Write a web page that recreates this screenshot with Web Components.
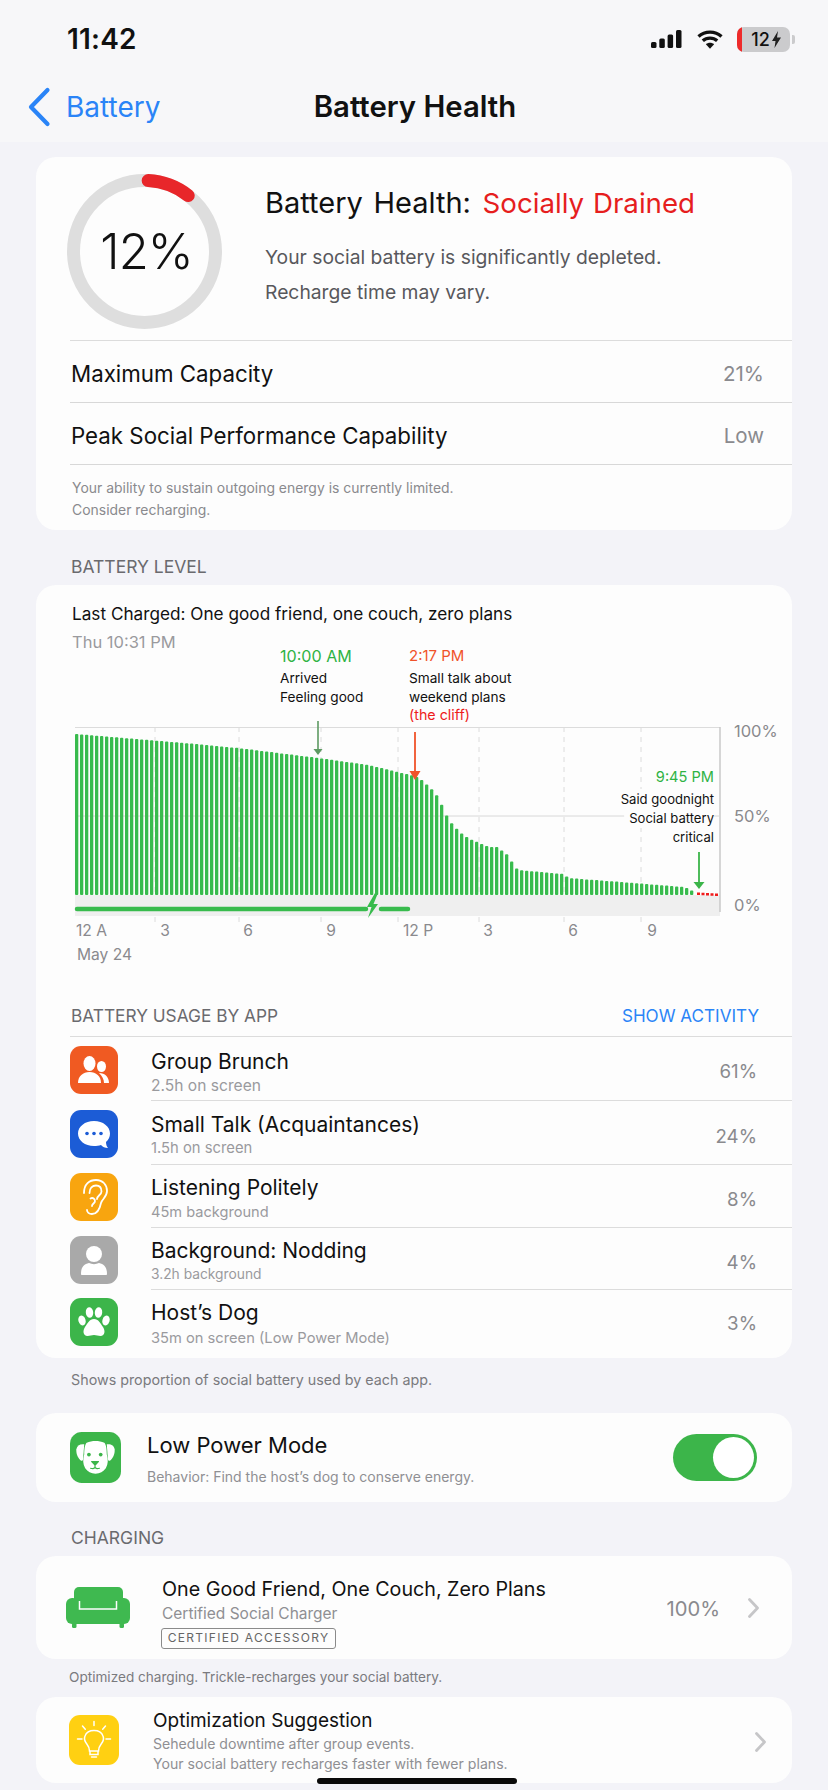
<!DOCTYPE html>
<html lang="en">
<head>
<meta charset="utf-8">
<title>Battery Health</title>
<style>
html,body{margin:0;padding:0;background:#f3f3f8}
body{font-family:Inter,"Liberation Sans",sans-serif;color:#111}
</style>
</head>
<body>
<battery-app>
  <status-bar></status-bar>
  <nav-bar back="Battery" title="Battery Health"></nav-bar>
  <page-body>
    <inset-card>
      <health-summary pct="12%"></health-summary>
      <stat-row label="Maximum Capacity" value="21%"></stat-row>
      <stat-row label="Peak Social Performance Capability" value="Low"></stat-row>
      <card-note>Your ability to sustain outgoing energy is currently limited.<br>Consider recharging.</card-note>
    </inset-card>
    <section-label style="--h:55px;--pb:7px">BATTERY LEVEL</section-label>
    <inset-card>
      <battery-chart></battery-chart>
      <usage-header></usage-header>
      <usage-row title="Group Brunch" sub="2.5h on screen" pct="61%" style="--h:64px;--it:9px;--tt:11px;--sfs:15.600px;--st:0px;--pp:10px">
        <svg slot="icon" viewBox="0 0 48 48"><rect width="48" height="48" rx="11" fill="#f05a22"/><ellipse cx="19.500" cy="17.500" rx="6" ry="7.500" fill="#fff"/><path d="M8 37c0-7 5-11 11.500-11S31 30 31 37z" fill="#fff"/><ellipse cx="31.500" cy="20.500" rx="4.500" ry="5.500" fill="#fff"/><path d="M29 27c6 0 10 4 10 10h-5c0-4-2-7-5-10z" fill="#fff"/></svg>
      </usage-row>
      <usage-row title="Small Talk (Acquaintances)" sub="1.5h on screen" pct="24%" style="--h:64px;--it:9px;--tt:10px;--sfs:14.800px;--st:-1px;--pp:12px">
        <svg slot="icon" viewBox="0 0 48 48"><rect width="48" height="48" rx="11" fill="#1c5cd6"/><path d="M24 11c9 0 16 5.500 16 12.500 0 3.500-1.500 6.500-4 8.500 0 2.500.8 4.500 2 6-3 0-5.500-1-7-3-2 .7-4.500 1-7 1-9 0-16-5.500-16-12.500S15 11 24 11z" fill="#fff"/><circle cx="17" cy="23.500" r="1.800" fill="#1c5cd6"/><circle cx="24" cy="23.500" r="1.800" fill="#1c5cd6"/><circle cx="31" cy="23.500" r="1.800" fill="#1c5cd6"/></svg>
      </usage-row>
      <usage-row title="Listening Politely" sub="45m background" pct="8%" style="--h:63px;--it:8px;--tt:9px;--sfs:14.600px;--st:0px;--pp:12px">
        <svg slot="icon" viewBox="0 0 48 48"><rect width="48" height="48" rx="11" fill="#f8a50f"/><g fill="none" stroke="#fff" stroke-width="1.800" stroke-linecap="round"><path d="M14 20C14 11 19.500 7 26 7c7 0 11 5 11 11 0 6-5 8-6 12-1 5-3 11-9 11-3 0-5-2-5-4"/><path d="M19.500 20c0-5 3-7.500 6.500-7.500 4 0 5.500 3 5.500 6 0 3.500-4.500 4-4.500 7.500"/><path d="M20.500 25.500c2-1.200 4.500 0 4.500 2.500 0 2.500-3 2.500-3 5"/></g></svg>
      </usage-row>
      <usage-row title="Background: Nodding" sub="3.2h background" pct="4%" style="--h:62px;--it:8px;--tt:9px;--sfs:13.800px;--st:-1px;--pp:12px">
        <svg slot="icon" viewBox="0 0 48 48"><rect width="48" height="48" rx="11" fill="#a9a9a9"/><circle cx="24" cy="18" r="8" fill="#fff"/><path d="M11 38c0-7 3-10 8-11 3 1.500 7 1.500 10 0 5 1 8 4 8 11 0 .7-.5 1-1 1H12c-.5 0-1-.3-1-1z" fill="#fff"/></svg>
      </usage-row>
      <usage-row title="Host’s Dog" sub="35m on screen (Low Power Mode)" pct="3%" last style="--h:68px;--it:8px;--tt:9px;--st:1px;--sfs:14.700px;--pp:11px">
        <svg slot="icon" viewBox="0 0 48 48"><rect width="48" height="48" rx="11" fill="#3cb54a"/><g fill="#fff"><ellipse cx="12" cy="22.500" rx="3.600" ry="5" transform="rotate(-18 12 22.500)"/><ellipse cx="19.500" cy="14.500" rx="3.700" ry="5.300" transform="rotate(-6 19.500 14.500)"/><ellipse cx="28.500" cy="14.500" rx="3.700" ry="5.300" transform="rotate(6 28.500 14.500)"/><ellipse cx="36" cy="22.500" rx="3.600" ry="5" transform="rotate(18 36 22.500)"/><path d="M24 21c4.500 0 6.500 4.500 9 8 2.500 3.500 2 9-2.500 9-2.500 0-4-1-6.500-1s-4 1-6.500 1c-4.500 0-5-5.500-2.500-9 2.500-3.500 4.500-8 9-8z"/></g></svg>
      </usage-row>
    </inset-card>
    <section-label style="--h:55px;--pb:22px;--fs:14.300px;--c:#7a7a7e;--pl:35px">Shows proportion of social battery used by each app.</section-label>
    <inset-card>
      <detail-row title="Low Power Mode" sub="Behavior: Find the host’s dog to conserve energy." style="--h:89px;--pl:34px;--iw:51px;--gap:26px;--tfs:22px;--sfs:14px;--tt:18px;--lh1:28px;--sm:7px;--pr:35px">
        <svg slot="icon" viewBox="0 0 52 52"><rect width="52" height="52" rx="12" fill="#3cb54a"/><path d="M14.500 12.500C10 12 7 14 6.500 17.500c-.5 4 1.500 9 4.500 11.500 1 .7 2 .3 2.300-1z" fill="#fff"/><path d="M37.500 12.500C42 12 45 14 45.500 17.500c.5 4-1.500 9-4.500 11.500-1 .7-2 .3-2.300-1z" fill="#fff"/><path d="M17 11c5.500-2.400 12.500-2.400 18 0 2 2 2.500 7 2.500 12 1.500 5 1.500 10-1 14-2.500 3.500-6 5.500-10.500 5.500S18 40.500 15.500 37c-2.500-4-2.500-9-1-14 0-5 .5-10 2.500-12z" fill="#fff"/><circle cx="19.300" cy="23" r="1.900" fill="#3cb54a"/><circle cx="31.300" cy="23" r="1.900" fill="#3cb54a"/><path d="M22 29.500h7c.5 0 .8.600.4 1.100l-2.800 3c-.6.500-1.500.5-2 0l-2.900-3c-.4-.5-.2-1.100.3-1.100z" fill="#3cb54a"/><path d="M25.500 33v3M21 37c2 .8 3.500.4 4.500-1 1 1.400 2.500 1.800 4.500 1" fill="none" stroke="#3cb54a" stroke-width="1.200" stroke-linecap="round"/></svg>
        <toggle-switch slot="trailing"></toggle-switch>
      </detail-row>
    </inset-card>
    <section-label style="--h:54px;--pb:7px">CHARGING</section-label>
    <inset-card>
      <detail-row title="One Good Friend, One Couch, Zero Plans" sub="Certified Social Charger" style="--h:103px;--pl:30px;--iw:64px;--gap:32px;--tfs:19.700px;--sfs:15.500px;--tt:19px;--lh1:28px;--sm:0px;--pr:33px">
        <svg slot="icon" viewBox="0 0 64 41" style="height:41px"><g fill="#3fb950"><rect x="8" y="0" width="49" height="19" rx="5"/><rect x="0" y="11" width="13" height="26" rx="6"/><rect x="51" y="11" width="13" height="26" rx="6"/><rect x="8" y="15" width="48" height="22"/><rect x="6" y="36" width="4.500" height="5" rx="1.500"/><rect x="53.500" y="36" width="4.500" height="5" rx="1.500"/></g><path d="M13.500 14v8h37v-8" fill="none" stroke="#fdfdfd" stroke-width="1.500"/></svg>
        <cert-badge slot="extra">CERTIFIED ACCESSORY</cert-badge>
        <value-chevron slot="trailing" value="100%"></value-chevron>
      </detail-row>
    </inset-card>
    <section-label style="--h:38px;--pb:9px;--fs:13.600px;--c:#7a7a7e;--pl:33px">Optimized charging. Trickle-recharges your social battery.</section-label>
    <inset-card>
      <detail-row title="Optimization Suggestion" sub="Sehedule downtime after group events.<br>Your social battery recharges faster with fewer plans." style="--h:86px;--pl:33px;--iw:50px;--gap:34px;--tfs:19px;--sfs:14.100px;--tt:11px;--lh1:26px;--sm:0px;--slh:20px;--pr:26px">
        <svg slot="icon" viewBox="0 0 50 50"><rect width="50" height="50" rx="11" fill="#ffd012"/><g fill="none" stroke="#fff" stroke-width="1.500" stroke-linecap="round"><path d="M20.500 36c0-4-1-5-3-7.500-2-2.500-2.500-5-1.500-7.500 1.300-3.500 5-5.500 9-5.500s7.700 2 9 5.500c1 2.500.5 5-1.500 7.500-2 2.500-3 3.500-3 7.500z"/><path d="M21 36.500v3h8v-3"/><path d="M22.500 42h5"/><path d="M25 6.500v4M13.500 11l2.800 3.200M36.500 11l-2.800 3.200M8.500 24h4.500M37 24h4.500"/></g></svg>
        <value-chevron slot="trailing" style="margin-top:3px"></value-chevron>
      </detail-row>
    </inset-card>
  </page-body>
  <home-bar></home-bar>
</battery-app>

<script>
const FONT = 'Inter,"Liberation Sans",sans-serif';
function def(name, html, setup){
  customElements.define(name, class extends HTMLElement{
    constructor(){super();this.attachShadow({mode:'open'});}
    connectedCallback(){
      const a=n=>this.getAttribute(n)||'';
      this.shadowRoot.innerHTML = typeof html==='function'?html(a,this):html;
      if(setup)setup(this.shadowRoot,this);
    }
  });
}

def('battery-app',`<style>
:host{display:block;position:relative;width:828px;height:1790px;overflow:hidden;background:#f3f3f8;font-family:${FONT};color:#111}
</style><slot></slot>`);

def('status-bar',`<style>
:host{display:flex;align-items:center;height:72px;background:#f7f7f9;padding:6px 33px 0 67px;box-sizing:border-box}
.time{font-size:28px;font-weight:600;letter-spacing:.2px;flex:1}
.ic{display:flex;align-items:center}
svg{display:block}
.bat{position:relative;width:53px;height:25px;background:#cbcbcd;border-radius:7px;margin-left:14px;overflow:hidden;display:flex;align-items:center;justify-content:center;gap:2px;font-size:18px;font-weight:500;padding-left:5px;box-sizing:border-box}
.bat i{position:absolute;left:0;top:0;bottom:0;width:5px;background:#ee2a2a}
.nub{width:3px;height:9px;background:#cbcbcd;border-radius:0 2px 2px 0;margin-left:2px}
</style>
<span class="time">11:42</span>
<span class="ic">
<svg width="31" height="18" viewBox="0 0 31 18" fill="#111"><rect x="0" y="12" width="5.500" height="6" rx="1.500"/><rect x="8.300" y="8.500" width="5.500" height="9.500" rx="1.500"/><rect x="16.600" y="4.500" width="5.500" height="13.500" rx="1.500"/><rect x="25" y="0" width="5.500" height="18" rx="1.500"/></svg>
<svg style="margin-left:15px" width="26" height="19" viewBox="0 0 26 19"><g fill="none" stroke="#111" stroke-width="3.300"><path d="M1.500 6.500C7.800.6 18.200.6 24.500 6.500"/><path d="M5.800 10.800c4-3.700 10.400-3.700 14.400 0"/></g><path d="M8.900 14.200c2.300-2 5.900-2 8.200 0L13 18.800z" fill="#111"/></svg>
<span class="bat"><i></i>12<svg width="9" height="17" viewBox="0 0 9 17"><path d="M6 0 0 10h3.500L2.500 17 9 6.500H5z" fill="#222"/></svg></span><span class="nub"></span>
</span>`);

def('nav-bar',(a)=>`<style>
:host{display:flex;align-items:center;justify-content:center;position:relative;height:70px;background:#f7f7f9;padding-bottom:2px;box-sizing:border-box}
.back{position:absolute;left:27px;top:13px;display:flex;align-items:center;gap:15px;color:#2a84f7;font-size:28px;height:44px}
h1{margin:0;font-size:29.300px;font-weight:600;color:#111;letter-spacing:0;position:relative;left:1px}
svg{display:block}
</style>
<span class="back"><svg width="24" height="40" viewBox="0 0 24 40"><path d="M20.500 3 4 20l16.500 17" fill="none" stroke="#2a84f7" stroke-width="4.200" stroke-linecap="round" stroke-linejoin="round"/></svg><span>${a('back')}</span></span>
<h1>${a('title')}</h1>`);

def('page-body',`<style>:host{display:block;padding:15px 36px 0}</style><slot></slot>`);

def('inset-card',`<style>:host{display:block;background:#fdfdfd;border-radius:20px;overflow:hidden}</style><slot></slot>`);

def('health-summary',(a)=>`<style>
:host{display:flex;height:184px;box-sizing:border-box;padding:17px 0 0 31px;position:relative}
:host::after{content:"";position:absolute;left:34px;right:0;bottom:0;height:1px;background:#dcdcdc}
.ring{position:relative;width:155px;height:155px;flex:none}
.ring svg{display:block}
.ring b{position:absolute;inset:0;padding-left:4px;display:flex;align-items:center;justify-content:center;font-size:49px;font-weight:350;color:#111;letter-spacing:-1px}
.txt{margin-left:43px;margin-top:9px}
h2{margin:0;font-size:29px;font-weight:400;line-height:40px;word-spacing:2.500px;white-space:nowrap}
h2 em{font-style:normal;color:#e61e1e;font-size:27.700px;word-spacing:1px;margin-left:1px}
p{margin:17px 0 0;font-size:19.300px;line-height:35px;color:#58585c;white-space:nowrap}
</style>
<div class="ring"><svg width="155" height="155" viewBox="0 0 155 155"><circle cx="77.500" cy="77.500" r="71" fill="none" stroke="#dedede" stroke-width="13"/><path d="M81.200 6.600A71 71 0 0 1 121.200 21.600" fill="none" stroke="#e8262a" stroke-width="13" stroke-linecap="round"/></svg><b>${a('pct')}</b></div>
<div class="txt"><h2>Battery Health: <em>Socially Drained</em></h2><p>Your social battery is significantly depleted.<br>Recharge time may vary.</p></div>`);

def('stat-row',(a)=>`<style>
:host{display:flex;align-items:center;justify-content:space-between;height:62px;padding:2px 28px 0 35px;box-sizing:border-box;position:relative;font-size:22.300px}
:host::after{content:"";position:absolute;left:34px;right:0;bottom:0;height:1px;background:#d8d8d8}
.v{color:#8a8a8e;font-size:20.500px}
</style><span>${a('label')}</span><span class="v">${a('value')}</span>`);

def('card-note',`<style>:host{display:block;padding:12px 0 9px 36px;font-size:13.950px;line-height:22px;color:#8a8a8e}</style><slot></slot>`);

def('section-label',`<style>:host{display:flex;align-items:flex-end;box-sizing:border-box;height:var(--h,55px);padding:0 0 var(--pb,7px) var(--pl,35px);font-size:var(--fs,17.500px);line-height:22px;color:var(--c,#6a6a6e);white-space:nowrap}</style><slot></slot>`);

const keys=[[75,734],[183,743],[237,748],[317,758],[367,765],[413,776],[420,780],[433,792],[438,800],[443,812],[448,821],[458,832],[468,839],[478,843],[487,847],[497,847],[502,853],[507,855],[512,866],[517,870],[562,874],[567,878],[633,883],[683,887],[693,892]];
function topAt(x){
  for(let i=1;i<keys.length;i++){
    if(x<=keys[i][0]){
      const [x0,y0]=keys[i-1],[x1,y1]=keys[i];
      return y0+(y1-y0)*(x-x0)/(x1-x0);
    }
  }
  return keys[keys.length-1][1];
}
function chartSvg(){
  let s='';
  [155,239,321,398,479,564,641].forEach(x=>{s+=`<line x1="${x}" y1="727" x2="${x}" y2="922" stroke="#dcdcdc" stroke-width="1" stroke-dasharray="5 5"/>`;});
  s+=`<rect x="75" y="895" width="645" height="21" fill="#efefef"/>`;
  s+=`<line x1="75" y1="727.500" x2="720" y2="727.500" stroke="#dcdcdc"/><line x1="720" y1="727" x2="720" y2="912" stroke="#c8c8c8" stroke-width="1.500"/>`;
  s+=`<line x1="75" y1="816" x2="720" y2="816" stroke="#d8d8d8"/>`;
  for(let x=75;x<693;x+=5){
    const t=topAt(x);
    s+=`<rect x="${x}" y="${t.toFixed(1)}" width="3.300" height="${(895-t).toFixed(1)}" rx="1" fill="#38bb4d"/>`;
  }
  for(let x=697;x<716;x+=4.500){
    s+=`<rect x="${x}" y="${892.500+(x-697)/18}" width="3" height="2.500" fill="#f01c1c"/>`;
  }
  s+=`<path d="M77 909H366M381 909H408" stroke="#38bb4d" stroke-width="4.500" stroke-linecap="round"/>`;
  s+=`<path d="M375 893 367 907h4.500L368 918l10-14h-4.500L378 893z" fill="#38bb4d"/>`;
  s+=`<path d="M318 721V750" stroke="#5d9a62" stroke-width="1.600"/><path d="M313.500 749h9L318 755z" fill="#5d9a62"/>`;
  s+=`<path d="M415 732V772" stroke="#f0532a" stroke-width="1.800"/><path d="M409.500 771h11L415 780z" fill="#f0532a"/>`;
  s+=`<path d="M699 852V882" stroke="#3cb54a" stroke-width="1.800"/><path d="M693.500 882h11L699 889z" fill="#3cb54a"/>`;
  return s;
}
def('battery-chart',`<style>
:host{display:block;height:408px;box-sizing:border-box;padding-top:16px}
.h1{margin-left:36px;font-size:17.200px;line-height:26px;color:#111;white-space:nowrap}
.h2{margin:2px 0 0 36px;font-size:16.500px;line-height:26px;color:#9a9a9e}
.canvas{position:relative;height:338px}
svg{position:absolute;left:0;top:0}
.l{position:absolute;white-space:nowrap;line-height:20px;transform:translateY(-50%);font-size:13.650px;color:#111}
.r{text-align:right;transform:translate(-100%,-50%)}
.c{transform:translate(-50%,-50%)}
.w{background:#fdfdfd;padding-left:5px;font-size:13.100px}
.g{color:#2fb344;font-size:14.600px}.gl{color:#2fb344;font-size:16.100px}.o{color:#f0532a;font-size:15px}.d{color:#ee1c1c;font-size:14.300px}
.a{color:#8a8a8e;font-size:15.600px}.p{color:#8a8a8e;font-size:16.500px}
</style>
<div class="h1">Last Charged: One good friend, one couch, zero plans</div>
<div class="h2">Thu 10:31 PM</div>
<div class="canvas"><svg width="756" height="338" viewBox="36 655 756 338">${chartSvg()}</svg><span id="labels"></span></div>`,
(root)=>{
  const L=[['10:00 AM',280,656,'gl'],['Arrived',280,678,''],['Feeling good',280,697,''],
   ['2:17 PM',409,656,'o'],['Small talk about',409,678,''],['weekend plans',409,697,''],['(the cliff)',409,715,'d'],
   ['100%',734,731,'p'],['50%',734,816,'p'],['0%',734,905,'p'],
   ['12 A',76,931,'a'],['3',165,931,'a c'],['6',248,931,'a c'],['9',331,931,'a c'],['12 P',403,931,'a'],['3',488,931,'a c'],['6',573,931,'a c'],['9',652,931,'a c'],['May 24',77,955,'a'],
   ['9:45 PM',714,777,'g r'],['Said goodnight',714,799,'r w'],['Social battery',714,818,'r w'],['critical',714,837,'r w']];
  root.getElementById('labels').innerHTML=L.map(([t,x,y,c])=>`<span class="l ${c}" style="left:${x-36}px;top:${y-655}px">${t}</span>`).join('');
});

def('usage-header',`<style>
:host{display:flex;align-items:center;justify-content:space-between;height:44px;padding:0 33px 0 35px;box-sizing:border-box;position:relative;font-size:17.300px;color:#6a6a6e}
:host::after{content:"";position:absolute;left:34px;right:0;bottom:0;height:1px;background:#dcdcdc}
b{font-weight:400;color:#2a84f7;font-size:17.100px}
</style><span>BATTERY USAGE BY APP</span><b>SHOW ACTIVITY</b>`);

def('usage-row',(a,el)=>`<style>
:host{display:flex;height:var(--h,64px);box-sizing:border-box;padding-left:34px}
.i{width:48px;height:48px;margin-top:var(--it,9px);margin-right:33px;flex:none}
::slotted(svg){display:block;width:48px;height:48px}
.b{flex:1;display:flex;justify-content:space-between;box-sizing:border-box;padding:var(--tt,11px) 35px 0 0;border-bottom:${el.hasAttribute('last')?'0':'1px solid #dcdcdc'}}
.t{font-size:21px;line-height:28px;color:#111}
.s{font-size:var(--sfs,15px);line-height:20px;color:#9a9a9e;margin-top:var(--st,0)}
.p{font-size:18.700px;color:#8a8a8e;line-height:28px;padding-top:var(--pp,11px)}
</style>
<div class="i"><slot name="icon"></slot></div>
<div class="b"><div><div class="t">${a('title')}</div><div class="s">${a('sub')}</div></div><div class="p">${a('pct')}</div></div>`);

def('detail-row',(a)=>`<style>
:host{display:flex;align-items:center;height:var(--h);box-sizing:border-box;padding:0 var(--pr,30px) 0 var(--pl,30px)}
.i{width:var(--iw);margin-right:var(--gap);flex:none;display:flex}
::slotted(svg){display:block;width:var(--iw);height:auto}
.b{flex:1;align-self:flex-start;padding-top:var(--tt,16px);min-width:0}
.t{font-size:var(--tfs,22px);line-height:var(--lh1,28px);color:#111;white-space:nowrap}
.s{font-size:var(--sfs,16px);line-height:var(--slh,22px);color:#8f8f93;margin-top:var(--sm,0);white-space:nowrap}
</style>
<div class="i"><slot name="icon"></slot></div>
<div class="b"><div class="t">${a('title')}</div><div class="s">${a('sub')}</div><slot name="extra"></slot></div>
<slot name="trailing"></slot>`);

def('toggle-switch',`<style>
:host{display:block;width:84px;height:47px;border-radius:24px;background:#3cb54a;position:relative;flex:none}
i{position:absolute;right:3px;top:3px;width:41px;height:41px;border-radius:50%;background:#fff}
</style><i></i>`);

def('cert-badge',`<style>
:host{display:block;width:175px;height:21px;box-sizing:border-box;border:1.500px solid #8a8a8a;border-radius:3px;font-size:12px;line-height:18px;letter-spacing:1.300px;color:#666;text-align:center;white-space:nowrap;margin-top:3px;margin-left:-1px}
</style><slot></slot>`);

def('value-chevron',(a)=>`<style>
:host{display:flex;align-items:center;gap:28px;flex:none}
span{font-size:20.200px;color:#8a8a8e;position:relative;top:1px}
svg{display:block}
</style>${a('value')?`<span>${a('value')}</span>`:''}<svg width="11" height="20" viewBox="0 0 11 20"><path d="M1.500 1.500 9.500 10l-8 8.500" fill="none" stroke="#c6c6c8" stroke-width="2.800" stroke-linecap="round" stroke-linejoin="round"/></svg>`);

def('home-bar',`<style>
:host{display:block;position:absolute;left:317px;top:1778px;width:200px;height:6px;border-radius:3px;background:#0a0a0a}
</style>`);
</script>
</body>
</html>
